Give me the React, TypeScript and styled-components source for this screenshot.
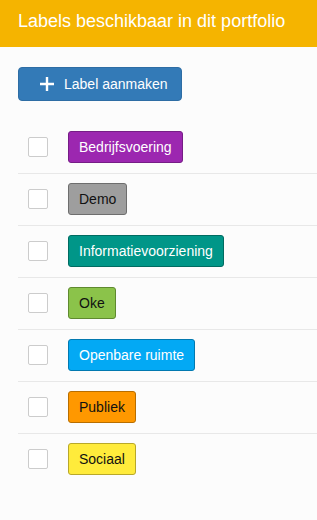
import styled, { createGlobalStyle } from 'styled-components';

interface Label {
  name: string;
  bg: string;
  border: string;
  dark?: boolean;
}

const labels: Label[] = [
  { name: 'Bedrijfsvoering', bg: '#9c27b0', border: '#761d86' },
  { name: 'Demo', bg: '#9e9e9e', border: '#6e6e6e', dark: true },
  { name: 'Informatievoorziening', bg: '#009688', border: '#006b61' },
  { name: 'Oke', bg: '#8bc34a', border: '#5f8a2f', dark: true },
  { name: 'Openbare ruimte', bg: '#03a9f4', border: '#0279b0' },
  { name: 'Publiek', bg: '#ff9800', border: '#b86e00', dark: true },
  { name: 'Sociaal', bg: '#ffeb3b', border: '#b8a82a', dark: true },
];

const GlobalStyle = createGlobalStyle`
  html, body {
    margin: 0;
    padding: 0;
    background: #fcfcfc;
    font-family: "Liberation Sans", Arial, sans-serif;
  }
`;

const PlusIcon = () => (
  <svg width="16" height="16" viewBox="0 0 16 16" aria-hidden="true">
    <path d="M8 1v14M1 8h14" stroke="#fff" strokeWidth="2.4" fill="none" />
  </svg>
);

const App = () => {
  return (
    <>
      <GlobalStyle />
      <Page>
        <Header>Labels beschikbaar in dit portfolio</Header>
        <Body>
          <CreateButton type="button">
            <PlusIcon />
            <span>Label aanmaken</span>
          </CreateButton>
          <List>
            {labels.map((label) => (
              <Row key={label.name}>
                <Checkbox />
                <Tag $bg={label.bg} $border={label.border} $dark={label.dark}>
                  {label.name}
                </Tag>
              </Row>
            ))}
          </List>
        </Body>
      </Page>
    </>
  );
};

const Page = styled.div`
  width: 317px;
  min-height: 520px;
  background: #fcfcfc;
`;

const Header = styled.div`
  background: #f5b400;
  color: #fff;
  font-size: 18px;
  line-height: 21px;
  padding: 11px 18px 15px;
`;

const Body = styled.div`
  padding: 20px 0 0 18px;
`;

const CreateButton = styled.button`
  display: flex;
  align-items: center;
  gap: 9px;
  height: 34px;
  padding: 0 13px 0 20px;
  background: #337ab7;
  border: 1px solid #2e6da4;
  border-radius: 4px;
  color: #fff;
  font-family: "Liberation Sans", Arial, sans-serif;
  font-size: 14px;
  cursor: pointer;
`;

const List = styled.div`
  margin-top: 21px;
  display: flex;
  flex-direction: column;
`;

const Row = styled.div`
  display: flex;
  align-items: center;
  gap: 20px;
  padding: 9px 0 10px 10px;
  border-bottom: 1px solid #e8e8e8;

  &:last-child {
    border-bottom: none;
  }
`;

const Checkbox = styled.span`
  width: 18px;
  height: 18px;
  border: 1px solid #cccccc;
  border-radius: 2px;
  background: #fff;
  flex-shrink: 0;
`;

const Tag = styled.span<{ $bg: string; $border: string; $dark?: boolean }>`
  display: inline-flex;
  align-items: center;
  height: 30px;
  padding: 0 10px;
  background: ${({ $bg }) => $bg};
  border: 1px solid ${({ $border }) => $border};
  border-radius: 3px;
  color: ${({ $dark }) => ($dark ? '#111' : '#fff')};
  font-size: 14px;
`;

export default App;
